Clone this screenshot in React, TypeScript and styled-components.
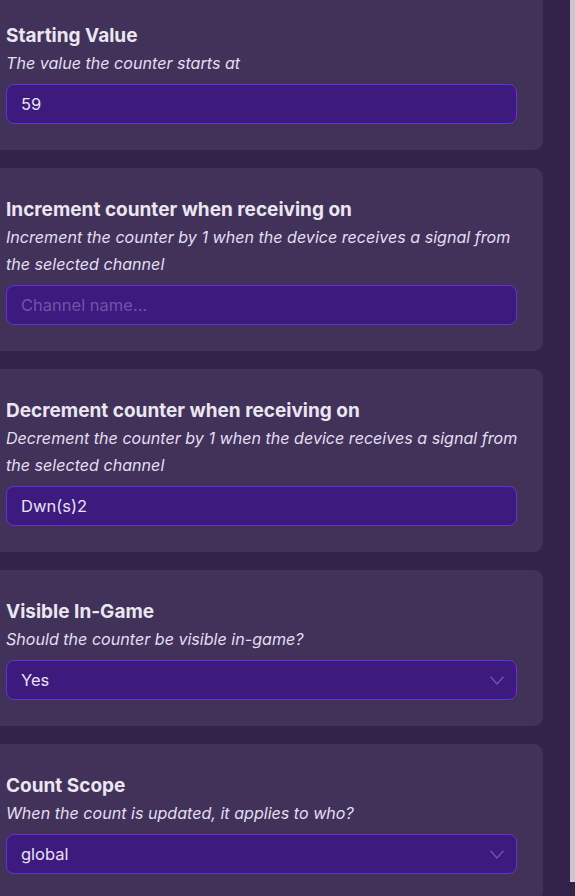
import styled, { createGlobalStyle } from "styled-components";

const GlobalStyle = createGlobalStyle`
  html, body {
    margin: 0;
    padding: 0;
    background: #33234b;
    overflow: hidden;
  }
  body {
    font-family: Inter, "Noto Sans", sans-serif;
  }
`;

const Page = styled.div`
  position: relative;
  width: 575px;
  height: 896px;
  overflow: hidden;
  background: #33234b;
`;

const List = styled.div`
  display: flex;
  flex-direction: column;
  gap: 18px;
  width: 543px;
  margin-top: -6px;
`;

const Card = styled.div`
  background: #41325a;
  border-radius: 0 9px 9px 0;
  padding: 28px 26px 26px 6px;
`;

const Title = styled.div`
  font-size: 19px;
  font-weight: 700;
  line-height: 28px;
  color: #ebe6f2;
`;

const Hint = styled.div`
  font-size: 16.1px;
  font-style: italic;
  line-height: 27px;
  color: #e4def0;
  margin-right: -10px;
`;

const Field = styled.div<{ $placeholder?: boolean }>`
  margin-top: 7px;
  height: 40px;
  box-sizing: border-box;
  border: 1px solid #6531d6;
  border-radius: 8px;
  background: #3d1a7e;
  display: flex;
  align-items: center;
  justify-content: space-between;
  padding: 0 12px 0 14px;
  font-size: 16.5px;
  color: ${(p) => (p.$placeholder ? "#6e55a8" : "#e8e2f2")};
`;

const Chevron = styled.svg`
  width: 14px;
  height: 9px;
`;

const Scrollbar = styled.div`
  position: absolute;
  top: 0;
  right: 0;
  width: 5px;
  height: 882px;
  background: #cbc7d2;
`;

interface SettingProps {
  title: string;
  hint: string;
  value: string;
  placeholder?: boolean;
  select?: boolean;
}

const Setting = ({ title, hint, value, placeholder, select }: SettingProps) => (
  <Card>
    <Title>{title}</Title>
    <Hint>{hint}</Hint>
    <Field $placeholder={placeholder}>
      <span>{value}</span>
      {select && (
        <Chevron viewBox="0 0 14 9">
          <path d="M0.5 0.8 L7 8 L13.5 0.8" fill="none" stroke="#6f56a6" strokeWidth="1.3" />
        </Chevron>
      )}
    </Field>
  </Card>
);

export default function App() {
  return (
    <Page>
      <GlobalStyle />
      <List>
        <Setting
          title="Starting Value"
          hint="The value the counter starts at"
          value="59"
        />
        <Setting
          title="Increment counter when receiving on"
          hint="Increment the counter by 1 when the device receives a signal from the selected channel"
          value="Channel name..."
          placeholder
        />
        <Setting
          title="Decrement counter when receiving on"
          hint="Decrement the counter by 1 when the device receives a signal from the selected channel"
          value="Dwn(s)2"
        />
        <Setting
          title="Visible In-Game"
          hint="Should the counter be visible in-game?"
          value="Yes"
          select
        />
        <Setting
          title="Count Scope"
          hint="When the count is updated, it applies to who?"
          value="global"
          select
        />
      </List>
      <Scrollbar />
    </Page>
  );
}
